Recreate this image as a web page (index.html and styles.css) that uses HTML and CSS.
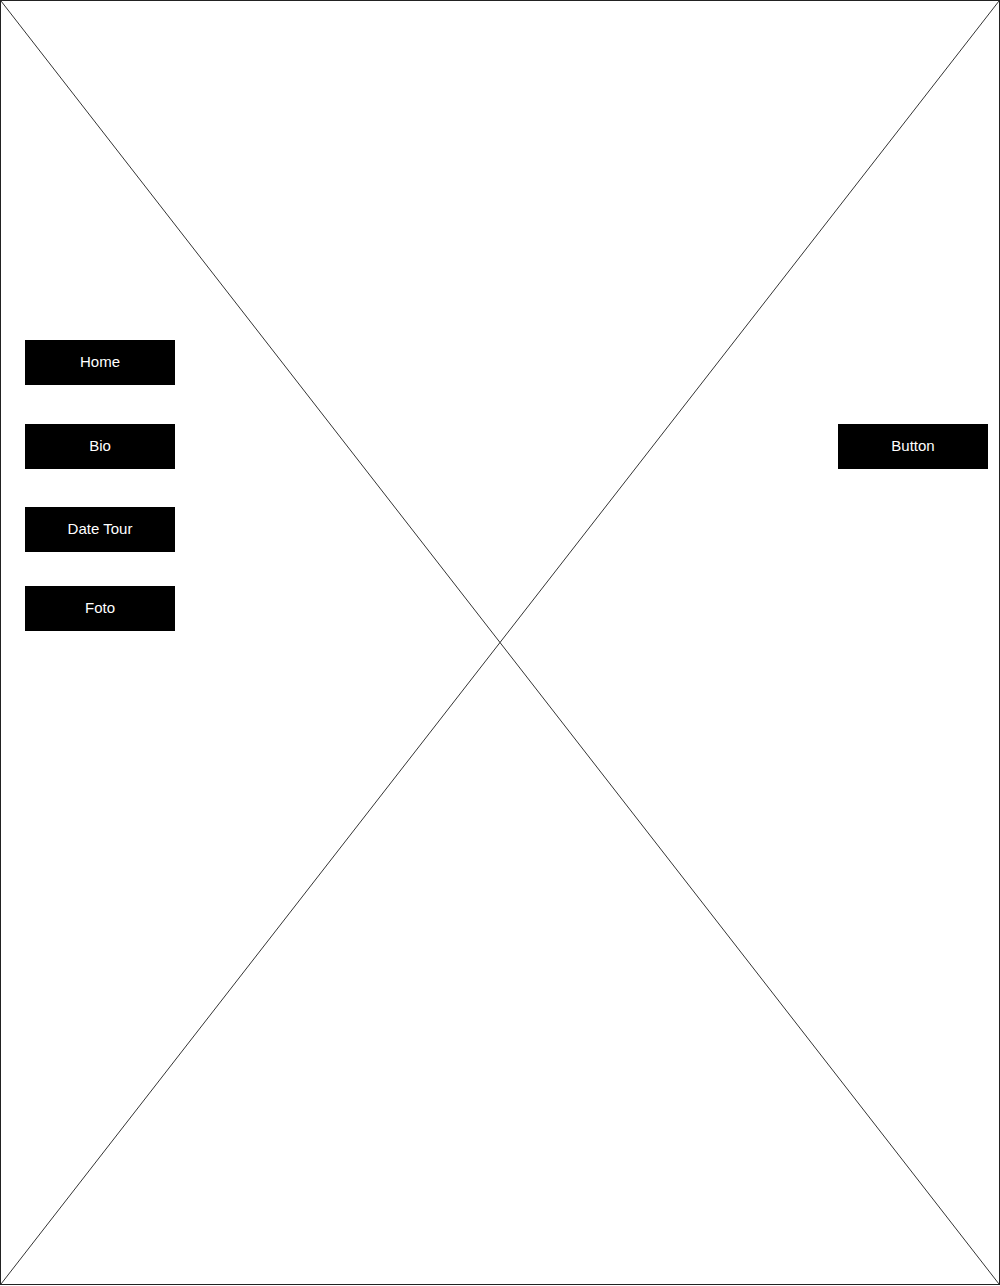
FILE: index.html
```html
<!DOCTYPE html>
<html lang="en">
<head>
    <meta charset="UTF-8">
    <meta name="viewport" content="width=device-width, initial-scale=1.0">
    <title>Wireframe</title>
    <link rel="stylesheet" href="styles.css">
</head>
<body>
    <div class="canvas">
        <svg class="placeholder" viewBox="0 0 1000 1285" preserveAspectRatio="none">
            <line x1="0" y1="0" x2="1000" y2="1285" stroke="#333" stroke-width="1"/>
            <line x1="1000" y1="0" x2="0" y2="1285" stroke="#333" stroke-width="1"/>
        </svg>
        <div class="layout">
            <nav class="menu">
                <a class="btn btn-home" href="#">Home</a>
                <a class="btn btn-bio" href="#">Bio</a>
                <a class="btn btn-tour" href="#">Date Tour</a>
                <a class="btn btn-foto" href="#">Foto</a>
            </nav>
            <div class="side">
                <a class="btn" href="#">Button</a>
            </div>
        </div>
    </div>
</body>
</html>
```

FILE: styles.css
```css
body {
    margin: 0;
    font-family: "Liberation Sans", Arial, sans-serif;
    background-color: #fff;
}
.canvas {
    position: relative;
    width: 1000px;
    height: 1285px;
    box-sizing: border-box;
    border: 1px solid #222;
}
.placeholder {
    position: absolute;
    top: 0;
    left: 0;
    width: 100%;
    height: 100%;
}
.layout {
    position: relative;
    display: flex;
    justify-content: space-between;
    padding: 339px 11px 0 24px;
}
.menu {
    display: flex;
    flex-direction: column;
}
.btn {
    display: flex;
    align-items: center;
    justify-content: center;
    box-sizing: border-box;
    width: 150px;
    height: 45px;
    padding-bottom: 2px;
    background-color: #000;
    color: #fff;
    font-size: 15px;
    text-decoration: none;
}
.btn-bio {
    margin-top: 39px;
}
.btn-tour {
    margin-top: 38px;
}
.btn-foto {
    margin-top: 34px;
}
.side {
    padding-top: 84px;
}
```
